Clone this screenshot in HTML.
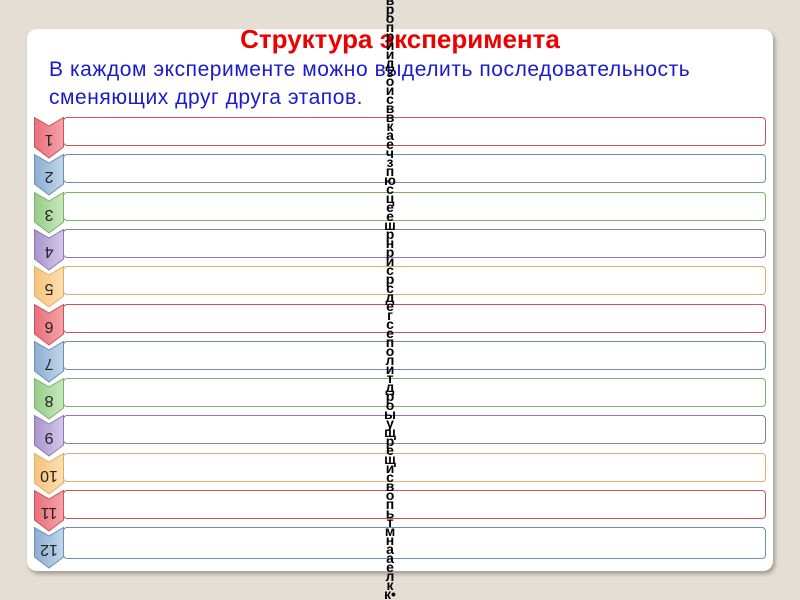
<!DOCTYPE html>
<html><head><meta charset="utf-8"><style>
html,body{margin:0;width:800px;height:600px;overflow:hidden}
body{background:#e4ded4;position:relative;font-family:"Liberation Sans",sans-serif}
.card{position:absolute;left:27px;top:29px;width:746px;height:542px;background:#fff;border-radius:10px;box-shadow:2px 3px 4px rgba(0,0,0,.3)}
.t{position:absolute;left:0;width:800px;top:24px;text-align:center;color:#e00;font-weight:bold;font-size:26px}
.p{position:absolute;left:49px;top:56px;color:#1a1acc;font-size:21px;line-height:28px;letter-spacing:0.55px}
.box{position:absolute;left:63px;width:701px;height:27px;border:1.3px solid;border-radius:4px;background:#fff}
.ch{position:absolute;left:34px;width:30px;height:42px}
.n{position:absolute;left:34px;width:30px;text-align:center;font-size:16px;transform:rotate(180deg);color:#222}
.col{position:absolute;left:384px;top:-4px;width:12px;height:604px;overflow:hidden;font-size:14px;line-height:9px;color:#000;font-weight:bold;word-break:break-all;text-align:center}
</style></head><body>
<div class="card"></div>
<div class="t">Структура эксперимента</div>
<div class="p">В каждом эксперименте можно выделить последовательность<br>сменяющих друг друга этапов.</div>
<div id="rows"></div>
<div class="col">вроприидзоисввкаечзпюсцеешрнрисрсдегсеполитдроыущрещисвопьтмнааелкк•икиназвпеедаэсср</div>
<script>
var c=[["#c9545d","#f4a3a8","#e8707a"],["#6c8fb3","#c2d6ea","#8aaed2"],["#7cb36c","#c8e8be","#96cc86"],["#8c78b6","#d3c8ea","#a894cc"],["#d9b16c","#fde0b0","#f6c27a"]];
var h="";
for(var i=0;i<12;i++){var y=117+i*37.3,k=c[i%5];
var bh=i==11?30:27;
h+='<div class="box" style="top:'+y+'px;height:'+bh+'px;border-color:'+k[0]+'"></div>';
h+='<svg class="ch" style="top:'+y+'px" viewBox="0 0 30 42"><defs><linearGradient id="g'+i+'" x1="0" x2="1"><stop offset="0" stop-color="'+k[2]+'"/><stop offset="1" stop-color="'+k[1]+'"/></linearGradient></defs><polygon points="0.5,0.5 15,9 29.5,0.5 29.5,30 15,41 0.5,30" fill="url(#g'+i+')" stroke="'+k[0]+'" stroke-width="1"/></svg>';
h+='<div class="n" style="top:'+(y+13)+'px">'+(i+1)+'</div>';}
document.getElementById("rows").innerHTML=h;
</script>
</body></html>
